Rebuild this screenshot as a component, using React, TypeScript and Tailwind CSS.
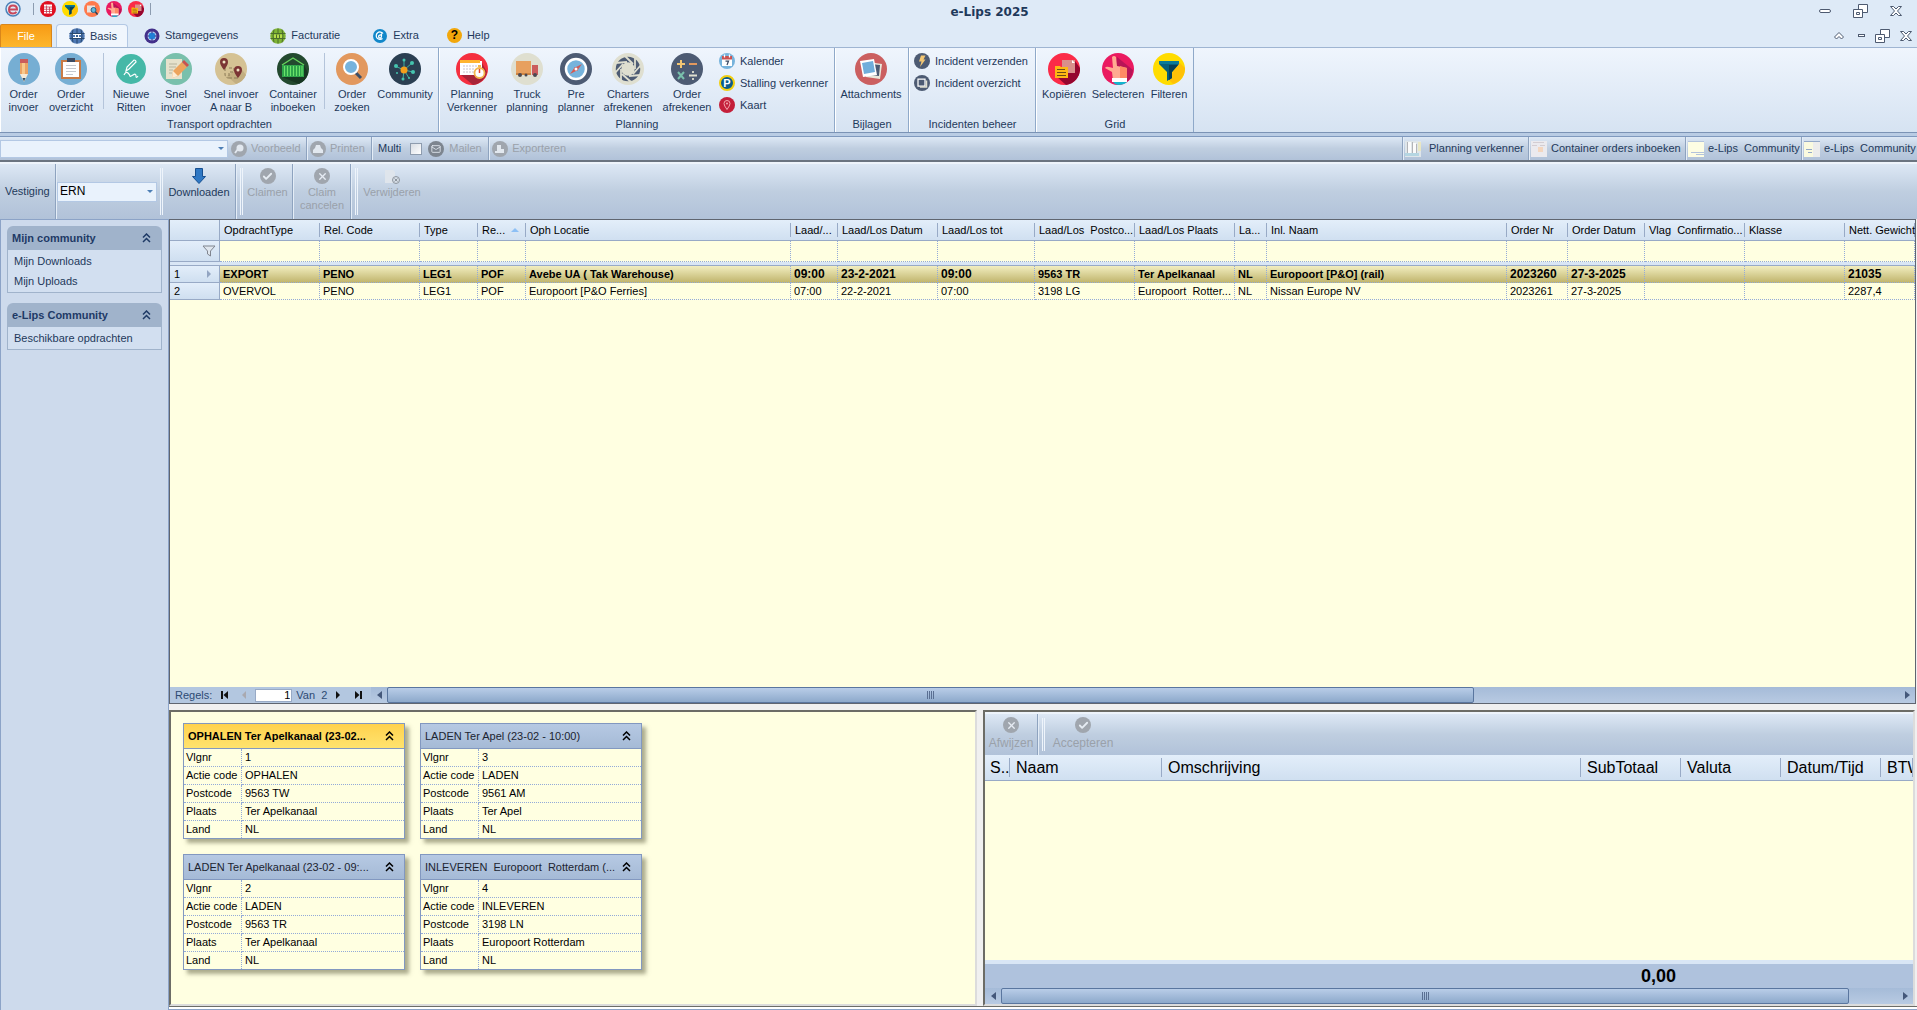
import React from "react";
import { Check, X, Mail } from "lucide-react";

/* ---------- Ribbon icons (32x32) ---------- */

const icons: Record<string, React.ReactNode> = {
  pencil: (
    <>
      <circle cx="16" cy="16" r="16" fill="#76aed3" />
      <path d="M12 6h8v4h-8z" fill="#cb5c5c" />
      <path d="M12 10h8v11h-8z" fill="#e9a363" />
      <path d="M14 10h3v11h-3z" fill="#f7c98c" />
      <path d="M12 21h8l-4 8z" fill="#f6ead6" />
      <path d="M14.500 25h3L16 28.500z" fill="#324a5e" />
    </>
  ),
  clipboard: (
    <>
      <circle cx="16" cy="16" r="16" fill="#76aed3" />
      <path d="M6 7h20v19H6z" fill="#c97b45" />
      <path d="M8 9h16v15H8z" fill="#fff" />
      <path d="M12 5h8v4h-8z" fill="#3c4b63" />
      <path d="M11 12.500h10M11 15.500h10M11 18.500h10M11 21.500h7" stroke="#c5c9cf" />
    </>
  ),
  ride: (
    <>
      <circle cx="16" cy="16" r="15" fill="#45b8a7" />
      <path
        d="M11 18l1-4 7-7q2 0 2 2l-7 7zM9 22q2-4 4-2t2 3 3-1 3 1 2 0"
        fill="none"
        stroke="#fff"
        strokeWidth="1.200"
      />
    </>
  ),
  quick: (
    <>
      <circle cx="16" cy="16" r="16" fill="#79c0ac" />
      <path d="M6 6h16v20H6z" fill="#e6e2cc" />
      <path d="M9 11h8M9 14h7M9 17h4M9 20h3" stroke="#b6b49e" />
      <path d="M13 18l9-9 5 5-9 9-6 2z" fill="#eda45c" />
      <path d="M22 9l2-2 5 5-2 2z" fill="#c9514f" />
      <path d="M13 18l5 5-6 2z" fill="#fdebd2" />
    </>
  ),
  route: (
    <>
      <circle cx="16" cy="16" r="16" fill="#d5c294" />
      <path d="M25 14l6 8a16 16 0 0 1-10 9l-9-8z" fill="#c2ae80" />
      <path d="M10 15v6q0 4 4 4M14 15h5v4h-5v6h6M20 25h4" fill="none" stroke="#8b7a56" strokeDasharray="3 2" />
      <path d="M5 9a4 4 0 0 1 8 0q0 3-4 8-4-5-4-8zM19 17a4 4 0 0 1 8 0q0 3-4 8-4-5-4-8z" fill="#7b3434" />
      <circle cx="9" cy="9" r="1.500" fill="#efe3c4" />
      <circle cx="23" cy="17" r="1.500" fill="#efe3c4" />
    </>
  ),
  container: (
    <>
      <circle cx="16" cy="16" r="16" fill="#23492f" />
      <path d="M27 12l4 8a16 16 0 0 1-9 11l-17-7z" fill="#173622" />
      <path d="M5 12L16 5l11 7" fill="none" stroke="#68d45e" strokeWidth="1.300" />
      <path d="M5 12h22v12H5z" fill="#2fa54b" />
      <path d="M7.500 13v10M10.500 13v10M13.500 13v10M16.500 13v10M19.500 13v10M22.500 13v10M25 13v10" stroke="#6be36a" />
    </>
  ),
  search: (
    <>
      <circle cx="16" cy="16" r="16" fill="#e2985e" />
      <path d="M19 19l6 6" stroke="#3e4f66" strokeWidth="3" />
      <circle cx="15" cy="14" r="7" fill="#76b3dc" stroke="#fff" strokeWidth="2" />
    </>
  ),
  network: (
    <>
      <circle cx="16" cy="16" r="16" fill="#2b3f52" />
      <path d="M15 17V7M15 17l8-7M15 17l9 2M15 17l-1 9M15 17l-9-4M15 17l5 8" stroke="#3fae9d" />
      <circle cx="15" cy="17" r="3.500" fill="#f59e1b" />
      <g fill="#45c4af">
        <circle cx="15" cy="7" r="1.500" />
        <circle cx="23" cy="10" r="2" />
        <circle cx="24" cy="19" r="2" />
        <circle cx="14" cy="26" r="1.500" />
        <circle cx="7" cy="13" r="2" />
        <circle cx="20" cy="25" r="1" />
        <circle cx="8" cy="20" r="1" />
      </g>
    </>
  ),
  planning: (
    <>
      <circle cx="16" cy="16" r="16" fill="#f52f3f" />
      <path d="M26 10l5 9a16 16 0 0 1-14 13L5 22z" fill="#a82438" />
      <path d="M4 8h22v14H4z" fill="#fff" />
      <path d="M4 7h20v3H4z" fill="#ffb42e" />
      <path d="M7 13h16M7 16h12M7 19h11" stroke="#c9c2cc" strokeDasharray="2 1" />
      <circle cx="23.500" cy="20" r="5" fill="#fff" stroke="#f3b64c" strokeWidth="1.800" />
      <path d="M23.500 20v-4" stroke="#e4452f" strokeWidth="1.500" />
      <path d="M22 12h3v2h-3z" fill="#f3b64c" />
    </>
  ),
  truck: (
    <>
      <circle cx="16" cy="16" r="16" fill="#dfdfd0" />
      <path d="M5 8h15v13H5z" fill="#e7a05f" />
      <path d="M21 12h6v10h-6z" fill="#cb5c5c" />
      <path d="M5 20h15v2H5z" fill="#cd8443" />
      <circle cx="9" cy="22" r="2" fill="#4b4a52" />
      <circle cx="15" cy="22" r="1.500" fill="#4b4a52" />
      <circle cx="24" cy="22" r="2" fill="#4b4a52" />
    </>
  ),
  compass: (
    <>
      <circle cx="16" cy="16" r="16" fill="#4d5b73" />
      <circle cx="16" cy="16" r="10" fill="#76b3dc" stroke="#fff" strokeWidth="2.500" />
      <path d="M22 11l-5 7-3-3z" fill="#cb5c5c" />
      <path d="M10 21l5-7 3 3z" fill="#d6584f" />
      <circle cx="16" cy="16" r="1.500" fill="#fff" />
    </>
  ),
  shutter: (
    <>
      <circle cx="16" cy="16" r="16" fill="#dfdfd0" />
      <circle cx="16" cy="16" r="9.500" fill="none" stroke="#4d5b73" strokeWidth="5.500" />
      <path
        d="M13 3l8 8M23 5l0 11M29 12l-8 9M29 22l-12 1M19 29l-9-8M9 27V16M3 20l8-9M3 10l12-1"
        stroke="#dfdfd0"
        strokeWidth="1.800"
      />
    </>
  ),
  calc: (
    <>
      <circle cx="16" cy="16" r="16" fill="#4d5b73" />
      <path d="M10 7v8M6 11h8" stroke="#f2c673" strokeWidth="2" />
      <path d="M18 11h8" stroke="#e2985e" strokeWidth="2" />
      <path d="M7 19l6 7M13 19l-6 7" stroke="#79c0ac" strokeWidth="2" />
      <path d="M18 22.500h8M22 18v2M22 25v2" stroke="#dfdfd0" strokeWidth="1.800" />
    </>
  ),
  photos: (
    <>
      <circle cx="16" cy="16" r="16" fill="#cb5f60" />
      <path d="M13 9l14 2-2 15-14-2z" fill="#e9e7da" />
      <path d="M15 11l10 1-1 11-10-1z" fill="#4d5b73" />
      <path d="M5 8l14-2 3 16-14 2z" fill="#fff" />
      <path d="M7 10l11-2 2 11-11 2z" fill="#70aedb" />
    </>
  ),
  copy: (
    <>
      <circle cx="16" cy="16" r="16" fill="#fb2b48" />
      <path d="M27 8l5 7a16 16 0 0 1-14 17l-9-8z" fill="#95062f" />
      <path d="M14 7h13v13H14z" fill="#d9908b" />
      <path d="M24 7l3 3h-3z" fill="#fff" />
      <path d="M7 13h5l1 1h7v11H7z" fill="#fdb813" />
      <path d="M9 16.500h8M9 19.500h9M9 22.500h9" stroke="#6d4a16" />
    </>
  ),
  hand: (
    <>
      <circle cx="16" cy="16" r="16" fill="#ea1a60" />
      <path d="M15 4l16 13a16 16 0 0 1-8 13L12 22z" fill="#b81457" />
      <path d="M10 4q2-2 4 0l1 9 10 2v12H11l-1-8-7-4q1-2 4-1l4 1z" fill="#ffab91" />
      <path d="M18 13l7 2v12h-7z" fill="#ff8a65" />
      <path d="M10 25h15v4H10z" fill="#fff" />
      <path d="M11 29h14q-3 3-9 3-3 0-5-3z" fill="#12b6cf" />
    </>
  ),
  funnel: (
    <>
      <circle cx="16" cy="16" r="16" fill="#ffdc00" />
      <path d="M26 9l6 6a16 16 0 0 1-12 16l-5-5z" fill="#ffc107" />
      <path d="M6 8h20v3l-7 8v6l-5 3v-9L6 11z" fill="#075f7c" />
      <path d="M16 12h9l-6 7v6l-3 2z" fill="#073f57" />
      <path d="M6 8h20v3H6z" fill="#0a7a98" />
    </>
  ),
  calendar: (
    <>
      <circle cx="16" cy="16" r="16" fill="#76b3dc" />
      <path d="M6 8h20v18H6z" fill="#fff" />
      <path d="M6 6h20v7H6z" fill="#cb5050" />
      <path d="M11 3v6M21 3v6" stroke="#fff" strokeWidth="2.500" />
      <path d="M13 16h6l-3 8" fill="none" stroke="#3c4b63" strokeWidth="2.500" />
    </>
  ),
  map: (
    <>
      <circle cx="16" cy="16" r="16" fill="#c41f3a" />
      <path d="M16 25q-6-8-6-12a6 6 0 0 1 12 0q0 4-6 12z" fill="none" stroke="#f3a5ad" strokeWidth="2" />
      <circle cx="16" cy="13" r="2" fill="#f3a5ad" />
    </>
  ),
  bolt: (
    <>
      <circle cx="16" cy="16" r="16" fill="#4d5b73" />
      <path d="M14 5h9l-4 8h4L12 28l3-11h-5z" fill="#f2c673" />
    </>
  ),
  windows: (
    <>
      <circle cx="16" cy="16" r="16" fill="#4d5b73" />
      <path d="M8 8h14v14H8z" fill="none" stroke="#fff" strokeWidth="2.500" />
      <path d="M12 24h13V11" fill="none" stroke="#dfdfd0" strokeWidth="3" />
    </>
  ),
  list: (
    <>
      <circle cx="16" cy="16" r="16" fill="#e01020" />
      <path d="M8 7h16v18H8z" fill="#fff" />
      <path d="M8 12h16M8 16.500h16M8 21h16M13 9v16M19 12v13" stroke="#c2334a" strokeWidth="1.500" />
    </>
  ),
  find: (
    <>
      <circle cx="16" cy="16" r="16" fill="#ff7a4d" />
      <path d="M6 9h16v14H6z" fill="#e8e3df" />
      <circle cx="19" cy="18" r="5" fill="#60b9dc" stroke="#2b5f80" strokeWidth="2" />
      <path d="M23 22l4 5" stroke="#2b3f52" strokeWidth="3" />
    </>
  ),
  globeBlue: (
    <>
      <circle cx="16" cy="16" r="15.500" fill="#4f79b5" />
      <path d="M1 11h30M1 21h30M16 1v30M8 3q-4 13 0 26M24 3q4 13 0 26" fill="none" stroke="#28496f" strokeWidth="2" />
      <path d="M8 13h16M8 19h16M13 13v6M19 13v6" stroke="#fff" strokeWidth="2" />
    </>
  ),
  target: (
    <>
      <circle cx="16" cy="16" r="15" fill="#43308a" />
      <circle cx="16" cy="16" r="9" fill="#c5d8f4" />
      <circle cx="16" cy="16" r="7" fill="#2c8fe0" />
      <path d="M16 5v22M5 16h22" stroke="#43308a" strokeWidth="2" />
      <path d="M11 11h10v10H11z" fill="#1f7fd6" />
    </>
  ),
  globeGreen: (
    <>
      <circle cx="16" cy="16" r="15.500" fill="#7fb535" />
      <path d="M1 11h30M1 21h30M16 1v30M8 3q-4 13 0 26M24 3q4 13 0 26" fill="none" stroke="#4c6f2b" strokeWidth="2" />
      <path d="M8 13h16v7H8z" fill="#b5dc4a" />
      <path d="M13 13v7M19 13v7" stroke="#4c6f2b" strokeWidth="2" />
    </>
  ),
  extra: (
    <>
      <circle cx="16" cy="16" r="14" fill="#1187c9" />
      <path d="M22 11a7.500 7.500 0 1 0-1 10M19 16a3 3 0 1 0-3 4q3 0 3-4v-5" fill="none" stroke="#fff" strokeWidth="2.500" />
    </>
  ),
};

function Icon({ name, small }: { name: string; small?: boolean }) {
  return (
    <svg viewBox="0 0 32 32" className={small ? "size-4 shrink-0" : "size-8 shrink-0"} aria-hidden="true">
      {icons[name]}
    </svg>
  );
}

function Parking() {
  return (
    <span className="flex size-4 items-center justify-center rounded-full border-2 border-[#f2cf10] bg-[#0b5c8c] text-[11px] leading-none font-bold text-white">
      P
    </span>
  );
}

function Chevrons() {
  return (
    <svg viewBox="0 0 9 10" className="h-[10px] w-[9px] shrink-0" fill="none" stroke="currentColor" strokeWidth="1.500" aria-hidden="true">
      <path d="M1 4.500L4.500 1 8 4.500M1 9l3.500-3.500L8 9" />
    </svg>
  );
}

function RestoreIcon() {
  return (
    <svg viewBox="0 0 15 14" className="h-[14px] w-[15px]" fill="#fff" stroke="#4d5a70" aria-hidden="true">
      <path d="M5.500.5h9v8h-9z" />
      <path d="M.5 5.500h9v8h-9z" />
      <path d="M3.500 8.500h3v2h-3z" />
    </svg>
  );
}

function CloseIcon() {
  return (
    <svg viewBox="0 0 12 10" className="h-[10px] w-3" fill="#fff" stroke="#4d5a70" aria-hidden="true">
      <path d="M.5.5h3L6 3 8.500.5h3L7.500 5l4 4.500h-3L6 7 3.500 9.500h-3L4.500 5z" />
    </svg>
  );
}

/* ---------- Ribbon ---------- */

function BigButton({ icon, lines, width }: { icon: string; lines: string[]; width: string }) {
  return (
    <button className={`flex flex-col items-center gap-[3px] leading-[13px] whitespace-nowrap ${width}`}>
      <Icon name={icon} />
      <span>
        {lines.map((line) => (
          <span key={line} className="block">
            {line}
          </span>
        ))}
      </span>
    </button>
  );
}

function SmallButton({ icon, label }: { icon: React.ReactNode; label: string }) {
  return (
    <button className="flex h-[22px] items-center gap-[5px] whitespace-nowrap">
      {icon}
      {label}
    </button>
  );
}

function Group({ label, width, children }: { label: string; width: string; children: React.ReactNode }) {
  return (
    <section className={`flex shrink-0 flex-col border-r border-l border-r-[#8fa9c9] border-l-white ${width}`}>
      <div className="flex flex-1 items-start pt-[5px]">{children}</div>
      <div className="h-4 text-center leading-4">{label}</div>
    </section>
  );
}

function Separator() {
  return <div className="h-14 w-px shrink-0 bg-[#b4c4da]" />;
}

/* ---------- Toolbar parts ---------- */

function Divider() {
  return <div className="w-[2px] shrink-0 self-stretch border-l border-[#8ea3bf] bg-[#e4edf7]" />;
}

function Handle() {
  return <div className="my-1 w-[3px] shrink-0 self-stretch border-x border-[#eef4fb]" />;
}

function Round({ children, dark }: { children: React.ReactNode; dark?: boolean }) {
  return (
    <span
      className={`flex size-4 shrink-0 items-center justify-center rounded-full text-[#e6ecf3] ${dark ? "bg-[#7d858f]" : "bg-[#a0a6ae]"}`}>
      {children}
    </span>
  );
}

/* White glyph for the disabled report buttons. */
function Glyph({ children }: { children: React.ReactNode }) {
  return (
    <svg viewBox="0 0 10 10" className="size-[10px]" fill="#e2e8ef" aria-hidden="true">
      {children}
    </svg>
  );
}

function Thumb({ children }: { children: React.ReactNode }) {
  return (
    <svg viewBox="0 0 16 16" className="size-4 shrink-0" aria-hidden="true">
      {children}
    </svg>
  );
}

const windowTabs = [
  {
    label: "Planning verkenner",
    width: "w-[124px]",
    gap: "gap-2",
    thumb: (
      <>
        <path d="M0 0h16v16H0z" fill="#dfe6ea" />
        <path d="M3 1h3v11H3zM8 2h3v10H8z" fill="#fbfbfb" />
        <path d="M0 12h14v3H0z" fill="#b5d6e2" />
        <path d="M2.500 1v11M7.500 1v11M11.500 3v9" stroke="#b3b4b8" />
        <path d="M13 1h3v9h-3z" fill="#e9e7c4" />
      </>
    ),
  },
  {
    label: "Container orders inboeken",
    width: "w-[155px]",
    gap: "gap-1",
    thumb: (
      <>
        <path d="M0 0h16v16H0z" fill="#ebeaee" />
        <path d="M2 1.500h11M1 4.500h5M9 4.500h5" stroke="#d3cdd2" />
        <path d="M7 6h5v5H7z" fill="#f3d6bf" />
      </>
    ),
  },
  {
    label: "e-Lips  Community",
    width: "w-[114px]",
    gap: "gap-1",
    thumb: (
      <>
        <path d="M0 0h16v16H0z" fill="#fdfde3" />
        <path d="M0 .5h16M3 11.500h13M8 13.500h8" stroke="#b3c3dc" />
      </>
    ),
  },
  {
    label: "e-Lips  Community",
    width: "w-[114px]",
    gap: "gap-1",
    thumb: (
      <>
        <path d="M0 0h16v16H0z" fill="#ececec" />
        <path d="M0 0h9v16H0z" fill="#fafadf" />
        <path d="M0 .5h16M2 8.500h6M4 11.500h4" stroke="#94a9c8" />
      </>
    ),
  },
];

/* ---------- Grid data ---------- */

const columns = [
  { title: "OpdrachtType", width: "w-[100px]" },
  { title: "Rel. Code", width: "w-[100px]" },
  { title: "Type", width: "w-[58px]" },
  { title: "Re...", width: "w-[48px]", sorted: true },
  { title: "Oph Locatie", width: "w-[265px]" },
  { title: "Laad/...", width: "w-[47px]" },
  { title: "Laad/Los Datum", width: "w-[100px]" },
  { title: "Laad/Los tot", width: "w-[97px]" },
  { title: "Laad/Los  Postco...", width: "w-[100px]" },
  { title: "Laad/Los Plaats", width: "w-[100px]" },
  { title: "La...", width: "w-[32px]" },
  { title: "Inl. Naam", width: "w-[240px]" },
  { title: "Order Nr", width: "w-[61px]" },
  { title: "Order Datum", width: "w-[77px]" },
  { title: "Vlag  Confirmatio...", width: "w-[100px]" },
  { title: "Klasse", width: "w-[100px]" },
  { title: "Nett. Gewicht", width: "" },
];

const orders = [
  ["EXPORT", "PENO", "LEG1", "POF", "Avebe UA ( Tak Warehouse)", "09:00", "23-2-2021", "09:00", "9563 TR", "Ter Apelkanaal", "NL", "Europoort [P&O] (rail)", "2023260", "27-3-2025", "", "", "21035"],
  ["OVERVOL", "PENO", "LEG1", "POF", "Europoort [P&O Ferries]", "07:00", "22-2-2021", "07:00", "3198 LG", "Europoort  Rotter...", "NL", "Nissan Europe NV", "2023261", "27-3-2025", "", "", "2287,4"],
];

const cards = [
  { title: "OPHALEN Ter Apelkanaal (23-02...", active: true, values: ["1", "OPHALEN", "9563 TW", "Ter Apelkanaal", "NL"] },
  { title: "LADEN Ter Apel (23-02 - 10:00)", values: ["3", "LADEN", "9561 AM", "Ter Apel", "NL"] },
  { title: "LADEN Ter Apelkanaal (23-02 - 09:...", values: ["2", "LADEN", "9563 TR", "Ter Apelkanaal", "NL"] },
  { title: "INLEVEREN  Europoort  Rotterdam (...", values: ["4", "INLEVEREN", "3198 LN", "Europoort Rotterdam", "NL"] },
];

const cardLabels = ["Vlgnr", "Actie code", "Postcode", "Plaats", "Land"];

const costColumns = [
  { title: "S..", width: "w-[25px]", pad: "pl-[5px]" },
  { title: "Naam", width: "w-[152px]", pad: "pl-1.5" },
  { title: "Omschrijving", width: "", pad: "pl-1.5" },
  { title: "SubTotaal", width: "w-[100px]", pad: "pl-1.5" },
  { title: "Valuta", width: "w-[100px]", pad: "pl-1.5" },
  { title: "Datum/Tijd", width: "w-[100px]", pad: "pl-1.5" },
  { title: "BTW", width: "w-[32px]", pad: "pl-1.5" },
];

const headerBg = "bg-linear-to-b from-[#e3eefa] to-[#cfdff0]";
const toolbarBg = "bg-linear-to-b from-[#dde8f5] via-[#bfcee0] to-[#b1c2d9]";

function Arrow({ d, muted }: { d: string; muted?: boolean }) {
  return (
    <svg viewBox="0 0 10 10" className="size-[10px]" fill={muted ? "#a9a9b0" : "#111"} aria-hidden="true">
      <path d={d} />
    </svg>
  );
}

/* Horizontal scrollbar; the thumb grows with the window. */
function ScrollBar({ rest }: { rest: string }) {
  return (
    <div className="flex h-4 min-w-0 flex-1 items-center bg-linear-to-b from-[#a5bbd8] to-[#b8cae2]">
      <button aria-label="Naar links" className="flex w-4 justify-center">
        <svg viewBox="0 0 5 8" className="h-2 w-[5px]" fill="#44587a"><path d="M5 0v8L0 4z" /></svg>
      </button>
      <div className="flex h-4 flex-1 items-center justify-center gap-px rounded-xs border border-[#5a769f] bg-linear-to-b from-[#b9cde8] to-[#8da9cb]">
        {[0, 1, 2, 3].map((i) => (
          <span key={i} className="h-2 w-px bg-[#5a6f92]" />
        ))}
      </div>
      <div className={rest} />
      <button aria-label="Naar rechts" className="flex w-4 justify-center">
        <svg viewBox="0 0 5 8" className="h-2 w-[5px]" fill="#44587a"><path d="M0 0v8l5-4z" /></svg>
      </button>
    </div>
  );
}

function SidePanel({ title, items }: { title: string; items: string[] }) {
  return (
    <section>
      <h2 className="flex h-6 items-center justify-between rounded-t-md bg-[#a0b3cb] pr-[11px] pl-[5px] font-bold text-[#1e3a66]">
        {title}
        <button aria-label={`${title} inklappen`}>
          <Chevrons />
        </button>
      </h2>
      <ul className="border border-t-0 border-[#a0b3cb] bg-[#d2dff0] pb-[2px] pl-1.5">
        {items.map((item) => (
          <li key={item} className="h-5 leading-[22px]">
            <a href="#">{item}</a>
          </li>
        ))}
      </ul>
    </section>
  );
}

function StopCard({ title, values, active }: { title: string; values: string[]; active?: boolean }) {
  return (
    <article className="w-[222px] border border-[#8298c0] text-black shadow-[4px_4px_4px_rgba(90,90,60,0.5)]">
      <h3
        className={`flex h-[25px] items-center justify-between border-b border-[#8298c0] pr-[10px] pl-1 whitespace-pre ${
          active ? "bg-linear-to-b from-[#ffd24d] to-[#ffe36e] font-bold" : "bg-linear-to-b from-[#b6c9e3] to-[#a5bad6] text-[#1c2430]"
        }`}>
        {title}
        <button aria-label="Inklappen" className="text-black">
          <Chevrons />
        </button>
      </h3>
      <table className="w-full table-fixed border-separate border-spacing-0 text-left">
        <tbody>
          {cardLabels.map((label, i) => {
            const line = i < 4 ? "h-[18px] border-b" : "h-[17px]";
            return (
              <tr key={label}>
                <th className={`w-[58px] border-r border-dotted border-[#93aad8] p-0 pl-[2px] font-normal whitespace-nowrap ${line}`}>
                  {label}
                </th>
                <td className={`border-dotted border-[#93aad8] p-0 pl-[3px] ${line}`}>{values[i]}</td>
              </tr>
            );
          })}
        </tbody>
      </table>
    </article>
  );
}

export default function App() {
  return (
    <div className="flex h-screen flex-col overflow-hidden bg-[#deeaf7] font-['Liberation_Sans',Arial,sans-serif] text-[11px] leading-[13px] text-[#1e395b]">
      {/* Title bar */}
      <header className="grid h-6 shrink-0 grid-cols-[1fr_auto_1fr] items-start">
        <div className="flex items-center gap-1.5 pt-px pl-[5px]">
          <svg viewBox="0 0 16 16" className="size-4" aria-hidden="true">
            <circle cx="8" cy="8" r="7" fill="#dfeaf6" stroke="#4a80b8" strokeWidth="1.500" />
            <path d="M4 8.500h8q0-4-4-4t-4 4 4 4q2 0 3.500-1.500" fill="none" stroke="#c9475a" strokeWidth="2" />
          </svg>
          <span className="ml-1.5 h-3 w-px bg-[#8c9cb0]" />
          {["list", "funnel", "find", "hand", "copy"].map((name) => (
            <button key={name} aria-label={name}>
              <Icon name={name} small />
            </button>
          ))}
          <span className="h-3 w-px bg-[#8c9cb0]" />
        </div>
        <h1 className="pt-1 pl-[62px] font-['DejaVu_Sans',Verdana,sans-serif] text-[12px] leading-4 font-bold">e-Lips 2025</h1>
        <div className="flex items-center justify-end gap-[22px] pt-1 pr-[15px]">
          <button aria-label="Minimaliseren" className="h-1 w-3 rounded-xs border border-[#4d5a70] bg-white" />
          <button aria-label="Verkleinen"><RestoreIcon /></button>
          <button aria-label="Sluiten"><CloseIcon /></button>
        </div>
      </header>

      {/* Ribbon tabs */}
      <nav className="flex h-[23px] shrink-0">
        <button className="w-[52px] rounded-t-xs border border-b-0 border-[#d9861b] bg-linear-to-b from-[#f79a13] to-[#fdb72c] text-white">
          File
        </button>
        <button className="ml-1 flex items-center gap-[5px] rounded-t-sm border border-b-0 border-[#b3c8e4] bg-[#f0f6fd] pr-2.5 pl-3">
          <Icon name="globeBlue" small />
          Basis
        </button>
        <button className="flex items-center gap-[5px] px-4"><Icon name="target" small />Stamgegevens</button>
        <button className="flex items-center gap-[5px] px-4"><Icon name="globeGreen" small />Facturatie</button>
        <button className="flex items-center gap-[5px] px-4"><Icon name="extra" small />Extra</button>
        <button className="flex items-center gap-[5px] px-3">
          <span className="flex size-[15px] items-center justify-center rounded-full bg-[#f2a70b] text-[12px] font-bold text-black">?</span>
          Help
        </button>
        <div className="ml-auto flex items-center gap-2.5 pr-[5px]">
          <button aria-label="Lint inklappen">
            <svg viewBox="0 0 10 8" className="h-2 w-[10px]" fill="#fff" stroke="#4d5a70"><path d="M.5 5L5 .5 9.500 5l-2 2L5 4.500 2.500 7z" /></svg>
          </button>
          <button aria-label="Venster minimaliseren" className="ml-1 h-[3px] w-[7px] border border-[#4d5a70] bg-white" />
          <button aria-label="Venster verkleinen"><RestoreIcon /></button>
          <button aria-label="Venster sluiten"><CloseIcon /></button>
        </div>
      </nav>

      {/* Ribbon */}
      <div className="flex h-[86px] shrink-0 border-t border-b border-t-[#9fb5d2] border-b-[#7b93b5] bg-linear-to-b from-[#eff5fd] to-[#d6e3f2]">
        <Group label="Transport opdrachten" width="w-[439px]">
          <BigButton icon="pencil" lines={["Order", "invoer"]} width="w-[45px]" />
          <BigButton icon="clipboard" lines={["Order", "overzicht"]} width="w-[50px]" />
          <div className="w-[7px]" />
          <Separator />
          <div className="w-[6px]" />
          <BigButton icon="ride" lines={["Nieuwe", "Ritten"]} width="w-[42px]" />
          <BigButton icon="quick" lines={["Snel", "invoer"]} width="w-[48px]" />
          <BigButton icon="route" lines={["Snel invoer", "A naar B"]} width="w-[62px]" />
          <BigButton icon="container" lines={["Container", "inboeken"]} width="w-[62px]" />
          <Separator />
          <BigButton icon="search" lines={["Order", "zoeken"]} width="w-[54px]" />
          <BigButton icon="network" lines={["Community"]} width="w-[52px]" />
        </Group>
        <Group label="Planning" width="w-[396px]">
          <div className="w-[6px]" />
          <BigButton icon="planning" lines={["Planning", "Verkenner"]} width="w-[52px]" />
          <BigButton icon="truck" lines={["Truck", "planning"]} width="w-[58px]" />
          <BigButton icon="compass" lines={["Pre", "planner"]} width="w-[40px]" />
          <BigButton icon="shutter" lines={["Charters", "afrekenen"]} width="w-[64px]" />
          <BigButton icon="calc" lines={["Order", "afrekenen"]} width="w-[54px]" />
          <div className="-mt-[3px] pl-[5px]">
            <SmallButton icon={<Icon name="calendar" small />} label="Kalender" />
            <SmallButton icon={<Parking />} label="Stalling verkenner" />
            <SmallButton icon={<Icon name="map" small />} label="Kaart" />
          </div>
        </Group>
        <Group label="Bijlagen" width="w-[74px]">
          <BigButton icon="photos" lines={["Attachments"]} width="w-[70px]" />
        </Group>
        <Group label="Incidenten beheer" width="w-[127px]">
          <div className="-mt-[3px] pl-1">
            <SmallButton icon={<Icon name="bolt" small />} label="Incident verzenden" />
            <SmallButton icon={<Icon name="windows" small />} label="Incident overzicht" />
          </div>
        </Group>
        <Group label="Grid" width="w-[158px]">
          <BigButton icon="copy" lines={["Kopiëren"]} width="w-[54px]" />
          <BigButton icon="hand" lines={["Selecteren"]} width="w-[54px]" />
          <BigButton icon="funnel" lines={["Filteren"]} width="w-[48px]" />
        </Group>
      </div>
      <div className="h-[3px] shrink-0 bg-[#b9cce4]" />

      {/* Report toolbar */}
      <div className={`flex h-[26px] shrink-0 items-center border-t border-b-2 border-t-[#7f99be] border-b-[#6b7480] text-[#9aa1aa] ${toolbarBg}`}>
        <label className="relative block">
          <select aria-label="Rapport" className="block h-[18px] w-[228px] appearance-none border border-[#b3c8e4] bg-[#e9f2fc] px-1" />
          <span className="pointer-events-none absolute top-[7px] right-1 border-x-3 border-t-3 border-x-transparent border-t-[#4d7fb5]" />
        </label>
        <button disabled className="flex w-[78px] items-center gap-1 pl-[3px]">
          <Round>
            <Glyph>
              <circle cx="6" cy="4" r="3.500" />
              <path d="M4 5L1 9" stroke="#e2e8ef" strokeWidth="1.800" />
            </Glyph>
          </Round>
          Voorbeeld
        </button>
        <Divider />
        <button disabled className="flex w-[63px] items-center gap-1 pl-[2px]">
          <Round><Glyph><path d="M3 1h4l1 3 2 2v3H0V6l2-2z" /></Glyph></Round>
          Printen
        </button>
        <Divider />
        <label className="flex items-center gap-[9px] pl-[5px] text-[#1e395b]">
          Multi
          <input type="checkbox" className="size-3 appearance-none border border-[#8e9cae] bg-linear-to-br from-[#d8dde4] to-white" />
        </label>
        <button disabled className="flex w-[66px] items-center gap-[5px] pl-1.5">
          <Round dark><Mail size={10} /></Round>Mailen
        </button>
        <Divider />
        <button disabled className="flex items-center gap-1 pl-[2px]">
          <Round><Glyph><path d="M2 1h4v4h3v4H0V7h2z" /></Glyph></Round>
          Exporteren
        </button>
        <div className="ml-auto flex self-stretch text-[#1e395b]">
          {windowTabs.map((tab, i) => (
            <React.Fragment key={i}>
              <Divider />
              <button className={`flex items-center pl-px whitespace-pre ${tab.width} ${tab.gap}`}>
                <Thumb>{tab.thumb}</Thumb>
                {tab.label}
              </button>
            </React.Fragment>
          ))}
        </div>
      </div>

      {/* Community toolbar */}
      <div className={`flex h-[57px] shrink-0 items-stretch border-t-2 border-t-[#eef4fb] text-[#9aa1aa] ${toolbarBg}`}>
        <label htmlFor="vestiging" className="flex w-[55px] items-center pl-[5px] text-[#1e395b]">Vestiging</label>
        <Divider />
        <div className="relative self-center">
          <select id="vestiging" className="block h-5 w-[100px] appearance-none border border-[#b3c8e4] bg-[#e9f2fc] px-[2px] text-[12px] text-black">
            <option>ERN</option>
          </select>
          <span className="pointer-events-none absolute top-2 right-1 border-x-3 border-t-3 border-x-transparent border-t-[#4d7fb5]" />
        </div>
        <div className="flex pl-[3px]"><Handle /></div>
        <button className="flex w-[72px] flex-col items-center gap-[2px] pt-1 text-[#1e395b]">
          <svg viewBox="0 0 16 16" className="size-4" aria-hidden="true">
            <path d="M4.500.5h7v8h3L8 15.500 1.500 8.500h3z" fill="#2f78c4" stroke="#174f90" />
          </svg>
          Downloaden
        </button>
        <Divider />
        <div className="flex pl-[3px]"><Handle /></div>
        <button disabled className="flex w-[49px] flex-col items-center gap-[2px] pt-1">
          <Round><Check size={11} strokeWidth={4} /></Round>Claimen
        </button>
        <Divider />
        <button disabled className="flex w-14 flex-col items-center gap-[2px] pt-1">
          <Round><X size={11} strokeWidth={3} /></Round>
          <span>Claim<br />cancelen</span>
        </button>
        <Divider />
        <div className="flex pl-[3px]"><Handle /></div>
        <button disabled className="flex w-[68px] flex-col items-center gap-[2px] pt-1">
          <svg viewBox="0 0 16 16" className="size-4" aria-hidden="true">
            <path d="M1 2h8l2 2v11H1z" fill="#dfe5ec" />
            <circle cx="12" cy="12" r="3.500" fill="#d5dde6" stroke="#8d959e" />
            <path d="M10.500 10.500l3 3M13.500 10.500l-3 3" stroke="#8d959e" />
          </svg>
          Verwijderen
        </button>
      </div>

      <div className="flex min-h-0 flex-1">
        {/* Navigation pane */}
        <aside className="flex w-[169px] shrink-0 flex-col gap-[10px] border-x border-t border-[#8ca3c7] bg-[#cddaec] pt-1.5 pr-[6px] pl-1.5">
          <SidePanel title="Mijn community" items={["Mijn Downloads", "Mijn Uploads"]} />
          <SidePanel title="e-Lips Community" items={["Beschikbare opdrachten"]} />
        </aside>

        <main className="flex min-w-0 flex-1 flex-col bg-[#f0f0f0]">
          {/* Orders grid */}
          <section className="mr-px flex min-h-0 flex-1 flex-col border border-[#5f6570] bg-[#ffffe1] text-black">
            <div className="min-h-0 flex-1 overflow-hidden">
              <table className="w-full table-fixed border-separate border-spacing-0 text-left whitespace-pre">
                <thead>
                  <tr className={headerBg}>
                    <th className="h-[21px] w-[50px] border-r border-b border-[#98aac6] p-0" />
                    {columns.map((col) => (
                      <th key={col.title} className={`h-[21px] overflow-hidden border-b border-[#98aac6] p-0 font-normal ${col.width}`}>
                        <div className="flex h-[14px] items-center justify-between border-r border-[#98aac6] pl-1 leading-[14px]">
                          {col.title}
                          {col.sorted && <span className="mr-1.5 border-x-4 border-b-4 border-x-transparent border-b-[#8dc0f5]" />}
                        </div>
                      </th>
                    ))}
                  </tr>
                  <tr>
                    <td className={`h-[21px] border-r border-b border-[#98aac6] p-0 pr-[3px] ${headerBg}`}>
                      <svg viewBox="0 0 14 12" className="ml-auto block h-3 w-[14px]" fill="#dfe6ee" stroke="#80858f">
                        <path d="M1 1h12L8.500 6v5l-3-2V6z" />
                      </svg>
                    </td>
                    {columns.map((col) => (
                      <td key={col.title} className="h-[21px] border-r border-b border-dotted border-[#93aad8] p-0">
                        <input aria-label={`Filter ${col.title}`} className="block h-4 w-full bg-transparent px-1 outline-none" />
                      </td>
                    ))}
                  </tr>
                  <tr>
                    <td colSpan={18} className="h-1 border-b border-[#98aac6] bg-[#d9e6f5] p-0" />
                  </tr>
                </thead>
                <tbody>
                  {orders.map((row, r) => (
                    <tr key={r} className={r === 0 ? "bg-linear-to-b from-[#f2eec0] to-[#bfb36a] font-bold" : ""}>
                      <th className={`border-r border-b border-[#98aac6] p-0 px-1 font-normal ${headerBg}`}>
                        <div className="flex items-center justify-between pr-1">
                          {r + 1}
                          {r === 0 && <span className="border-y-4 border-l-4 border-y-transparent border-l-[#93a5c2]" />}
                        </div>
                      </th>
                      {row.map((value, c) => (
                        <td
                          key={c}
                          className={`h-[17px] overflow-hidden border-r border-b border-dotted border-[#93aad8] p-0 pl-[3px] leading-4 ${
                            r === 0 && /^\d[\d:-]+$/.test(value) ? "text-[12px]" : ""
                          }`}>
                          {value}
                        </td>
                      ))}
                    </tr>
                  ))}
                </tbody>
              </table>
            </div>
            <div className="flex h-4 shrink-0 items-center bg-[#b3c7e0] text-[#2d4a73]">
              <div className="flex w-[201px] shrink-0 items-center pl-[5px]">
                Regels:
                <button aria-label="Eerste" className="ml-2"><Arrow d="M1 1h2v8H1zM8 1v8L3.500 5z" /></button>
                <button aria-label="Vorige" className="ml-[9px]"><Arrow d="M7 1v8L3 5z" muted /></button>
                <input aria-label="Regel" defaultValue="1" className="ml-1.5 h-[13px] w-[37px] border border-[#98aac6] bg-white px-px text-right text-black" />
                <span className="ml-1 whitespace-pre">Van  2</span>
                <button aria-label="Volgende" className="ml-1.5"><Arrow d="M3 1v8l4-4z" /></button>
                <button aria-label="Laatste" className="ml-2.5"><Arrow d="M2 1v8l4.500-4zM7 1h2v8H7z" /></button>
              </div>
              <ScrollBar rest="w-[425px]" />
            </div>
          </section>

          <div className="h-[6px] shrink-0" />

          <div className="mr-[2px] flex h-[296px] shrink-0">
            {/* Stops */}
            <section className="flex-1 border-2 border-t-[#6c6c66] border-r-[#dcdcdc] border-b-[#dcdcdc] border-l-[#6c6c66] bg-[#ffffe1] pt-[11px] pl-3">
              <div className="grid grid-cols-[222px_222px] gap-[15px]">
                {cards.map((card) => (
                  <StopCard key={card.title} {...card} />
                ))}
              </div>
            </section>

            <div className="w-[6px] shrink-0" />

            {/* Costs */}
            <section className="flex w-[932px] shrink-0 flex-col border-2 border-t-[#6c6c66] border-r-[#dcdcdc] border-b-[#dcdcdc] border-l-[#6c6c66] bg-[#ffffe1]">
              <div className={`flex h-[43px] shrink-0 border-t-2 border-[#eef4fb] text-[12px] text-[#9aa1aa] ${toolbarBg}`}>
                <button disabled className="flex w-[52px] flex-col items-center gap-1 pt-[3px]">
                  <Round><X size={11} strokeWidth={3} /></Round>Afwijzen
                </button>
                <Divider />
                <div className="flex pl-[3px]"><Handle /></div>
                <button disabled className="flex w-[76px] flex-col items-center gap-1 pt-[3px]">
                  <Round><Check size={11} strokeWidth={4} /></Round>Accepteren
                </button>
              </div>
              <table className="w-full table-fixed border-separate border-spacing-0 text-left text-[16px] text-black">
                <thead>
                  <tr className={headerBg}>
                    {costColumns.map((col) => (
                      <th key={col.title} className={`h-[26px] overflow-hidden border-b border-[#98aac6] p-0 font-normal ${col.width}`}>
                        <div className={`h-[19px] overflow-hidden border-r border-[#98aac6] leading-[19px] ${col.pad}`}>{col.title}</div>
                      </th>
                    ))}
                  </tr>
                </thead>
              </table>
              <div className="flex-1" />
              <div className="flex h-7 shrink-0 items-center justify-end border-t-4 border-[#d9e6f5] bg-[#afc2dd] pr-[237px] text-[18px] font-bold text-black">
                0,00
              </div>
              <div className="flex h-4 shrink-0">
                <ScrollBar rest="w-12" />
              </div>
            </section>
          </div>
          <div className="h-1 shrink-0 border-t border-b border-t-[#6c6c66] border-b-[#8ca3c7] bg-white" />
        </main>
      </div>
    </div>
  );
}
